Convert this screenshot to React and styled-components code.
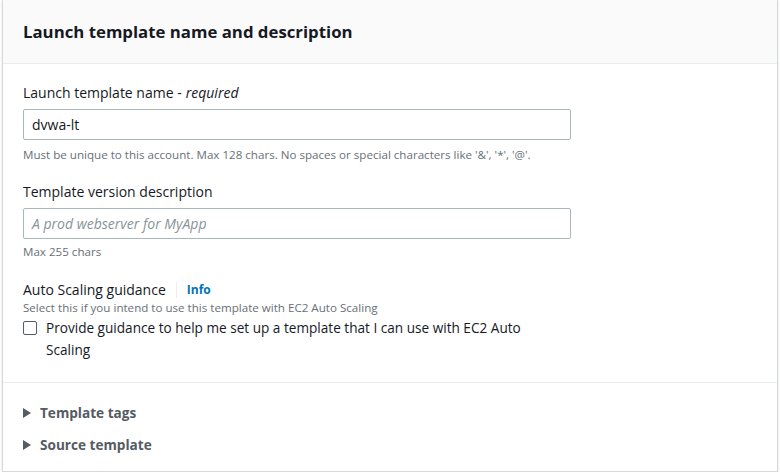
import React from 'react'
import styled, { createGlobalStyle } from 'styled-components'

const Global = createGlobalStyle`
  body { margin: 0; background: #fff; font-family: "Open Sans", "Noto Sans", sans-serif; color: #16191f; }
`

const Panel = styled.div`
  margin: 0 2px 0 2px;
  height: 472px;
  border: 1px solid #d5dbdb;
  border-top: none;
  box-sizing: border-box;
  box-shadow: 0 1px 2px rgba(0, 0, 0, 0.15);
  display: flex;
  flex-direction: column;
`

const Header = styled.div`
  background: #fafafa;
  border-bottom: 1px solid #eaeded;
  height: 64px;
  box-sizing: border-box;
  display: flex;
  align-items: center;
  padding: 0 20px;
  font-size: 16.8px;
  font-weight: 700;
`

const Body = styled.div`
  padding: 19px 20px 0;
  display: flex;
  flex-direction: column;
  border-bottom: 1px solid #eaeded;
  height: 319px;
  box-sizing: border-box;
`

const Field = styled.div`
  display: flex;
  flex-direction: column;
  margin-bottom: ${(p) => p.gap || 0}px;
`

const Label = styled.div`
  font-size: 14px;
  line-height: 20px;
  margin-bottom: 6px;
  display: flex;
  align-items: center;
  em { margin-left: 4px; }
`

const InfoLink = styled.span`
  margin-left: 10px;
  padding-left: 10px;
  border-left: 1px solid #eaeded;
  color: #0073bb;
  font-weight: 700;
  font-size: 12px;
  line-height: 16px;
`

const Input = styled.div`
  width: 548px;
  height: 31px;
  box-sizing: border-box;
  border: 1px solid #aab7b8;
  border-radius: 2px;
  padding: 0 8px;
  display: flex;
  align-items: center;
  font-size: 14px;
  color: ${(p) => (p.placeholder ? '#879596' : '#16191f')};
  font-style: ${(p) => (p.placeholder ? 'italic' : 'normal')};
`

const Hint = styled.div`
  font-size: 11.6px;
  line-height: 16px;
  color: #687078;
  margin-top: ${(p) => p.top ?? 7}px;
`

const CheckRow = styled.div`
  display: flex;
  align-items: flex-start;
  gap: 9px;
  margin-top: 1px;
  font-size: 13.6px;
  line-height: 22px;
  width: 510px;
`

const Box = styled.span`
  flex: none;
  width: 12px;
  height: 12px;
  border: 1px solid #545b64;
  border-radius: 2px;
  margin-top: 4px;
`

const Expanders = styled.div`
  padding: 20px 20px 0;
  display: flex;
  flex-direction: column;
  gap: 12px;
`

const Expander = styled.div`
  display: flex;
  align-items: center;
  gap: 9px;
  font-size: 13.6px;
  font-weight: 700;
  color: #545b64;
  line-height: 20px;
`

const Caret = styled.span`
  width: 0;
  height: 0;
  border-top: 5px solid transparent;
  border-bottom: 5px solid transparent;
  border-left: 8px solid #545b64;
`

export default function App() {
  return (
    <>
      <Global />
      <Panel>
        <Header>Launch template name and description</Header>
        <Body>
          <Field gap={19}>
            <Label>Launch template name -<em>required</em></Label>
            <Input>dvwa-lt</Input>
            <Hint>Must be unique to this account. Max 128 chars. No spaces or special characters like '&amp;', '*', '@'.</Hint>
          </Field>
          <Field gap={20}>
            <Label>Template version description</Label>
            <Input placeholder="1">A prod webserver for MyApp</Input>
            <Hint top={5}>Max 255 chars</Hint>
          </Field>
          <Field>
            <Label style={{ marginBottom: 0 }}>
              Auto Scaling guidance <InfoLink>Info</InfoLink>
            </Label>
            <Hint top={0}>Select this if you intend to use this template with EC2 Auto Scaling</Hint>
            <CheckRow>
              <Box />
              <span>Provide guidance to help me set up a template that I can use with EC2 Auto Scaling</span>
            </CheckRow>
          </Field>
        </Body>
        <Expanders>
          <Expander><Caret />Template tags</Expander>
          <Expander><Caret />Source template</Expander>
        </Expanders>
      </Panel>
    </>
  )
}
